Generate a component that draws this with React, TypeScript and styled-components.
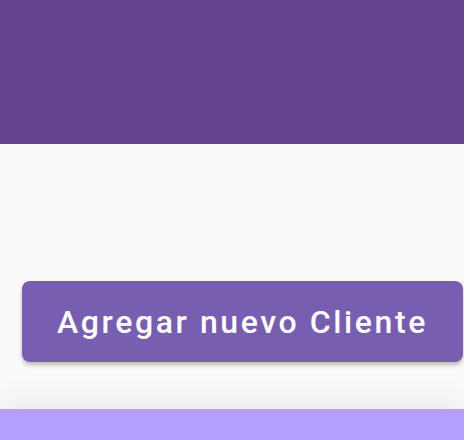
import React from "react";
import styled, { createGlobalStyle } from "styled-components";

const Global = createGlobalStyle`
  html, body { margin: 0; padding: 0; background: #fdfdfd; }
  body { font-family: Roboto, "Noto Sans", sans-serif; }
`;

const Page = styled.div`
  width: 464px;
  height: 440px;
  display: flex;
  flex-direction: column;
  background: #fafafa;
  overflow: hidden;
`;

const Header = styled.header`
  height: 144px;
  flex: none;
  background: #67428f;
`;

const Main = styled.main`
  flex: 1;
  display: flex;
  flex-direction: column;
  padding: 137px 1px 0 22px;
`;

const AddButton = styled.button`
  height: 81px;
  padding: 0;
  border: none;
  border-radius: 8px;
  background: #775eb0;
  color: #ffffff;
  font-family: Roboto, sans-serif;
  font-weight: 500;
  font-size: 32px;
  letter-spacing: 2.6px;
  box-shadow: 0 3px 4px rgba(0, 0, 0, 0.25);
  cursor: pointer;
`;

const BottomBar = styled.footer`
  height: 31px;
  flex: none;
  background: #b39ffd;
  box-shadow: 0 -6px 28px rgba(0, 0, 0, 0.08);
`;

export default function App() {
  return (
    <>
      <Global />
      <Page>
        <Header />
        <Main>
          <AddButton>Agregar nuevo Cliente</AddButton>
        </Main>
        <BottomBar />
      </Page>
    </>
  );
}
